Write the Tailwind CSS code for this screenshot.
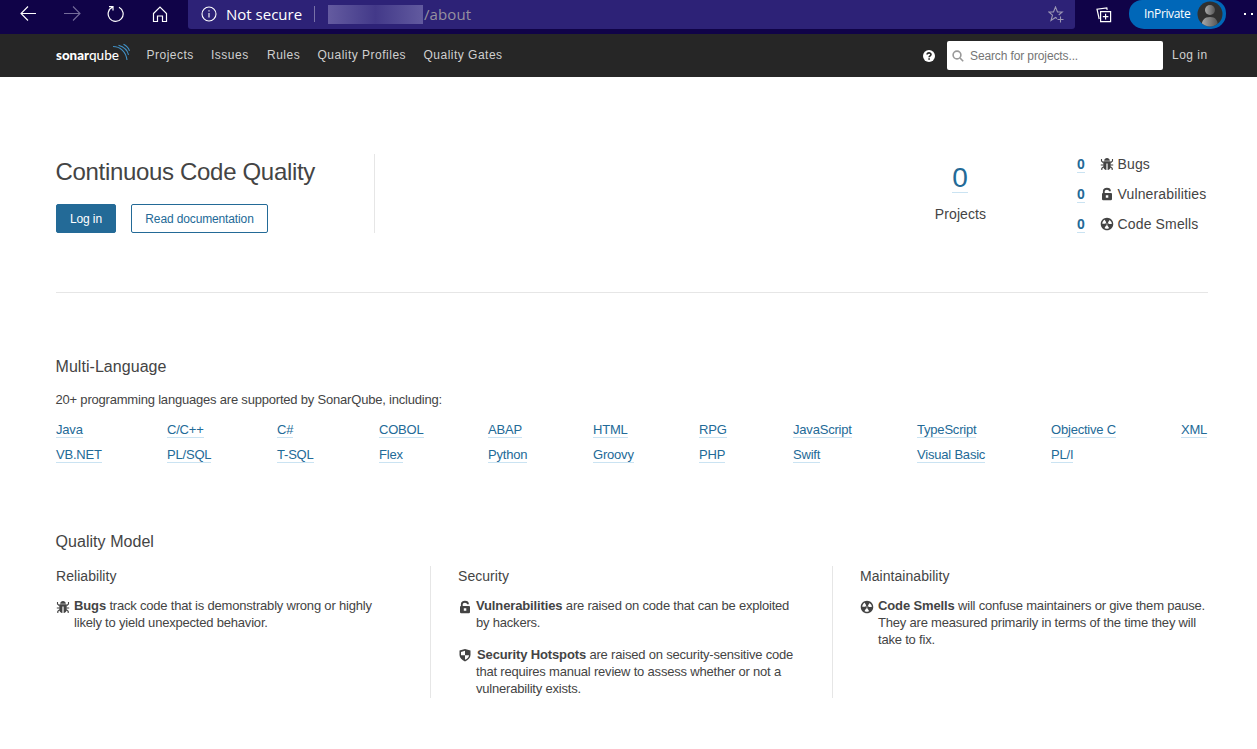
<!DOCTYPE html>
<html lang="en">
<head>
<meta charset="utf-8">
<title>SonarQube</title>
<script src="https://cdn.jsdelivr.net/npm/@tailwindcss/browser@4"></script>
</head>
<body class="w-[1257px] h-[749px] overflow-hidden bg-white text-[13px] leading-[17px] text-[#444] font-['Liberation_Sans',Arial,sans-serif]">
<svg class="hidden">
  <symbol id="bug" viewBox="0 0 14 14"><path d="M4.200 3.700C4.200 0 9.800 0 9.800 3.700zM3.300 4.300h7.400v5.200c0 2-1.500 3.500-3 3.500h-.1V6.500H6.400V13h-.1c-1.500 0-3-1.500-3-3.500z"/><path d="M3.500 5.800 1.500 4V2M10.500 5.800l2-1.800V2M3.500 8H.8M10.500 8h2.700M3.700 9.800 1.800 11.300V13M10.300 9.800l1.900 1.500V13" fill="none" stroke="#444" stroke-width="1.100"/></symbol>
  <symbol id="lock" viewBox="0 0 14 14"><path fill-rule="evenodd" d="M3 6h8a1 1 0 0 1 1 1v5a1.200 1.200 0 0 1-1.200 1.200H3.200A1.200 1.200 0 0 1 2 12V7a1 1 0 0 1 1-1zM5.800 8.200v2.600h2.500V8.200z"/><path d="M3.800 6.500V4.200C3.800 .9 10 .9 10 4.200" fill="none" stroke="#444" stroke-width="1.800"/></symbol>
  <symbol id="smell" viewBox="1.300 1.300 13.400 13.400"><path d="M8 2C4.700 2 2 4.700 2 8s2.700 6 6 6 6-2.700 6-6-2.700-6-6-6zm-.5 5.500h.9v.9h-.9v-.9zm-3.800.2c-.1 0-.2-.1-.2-.2 0-.4.1-1.200.6-2S5.300 4.200 5.600 4c.2 0 .3 0 .3.1l1.300 2.300c0 .1 0 .2-.1.2-.1.2-.2.3-.3.5-.1.2-.2.4-.2.5 0 .1-.1.2-.2.2l-2.700-.1zM9.900 12c-.3.2-1.100.5-2 .5-.9 0-1.700-.3-2-.5-.1 0-.1-.2-.1-.3l1.300-2.300c0-.1.1-.1.2-.1.2.1.3.1.5.1s.4 0 .5-.1c.1 0 .2 0 .2.1l1.300 2.300c.2.2.2.3.1.3zm2.500-4.100L9.700 8c-.1 0-.2-.1-.2-.2 0-.2-.1-.4-.2-.5 0-.1-.2-.3-.3-.4-.1 0-.1-.1-.1-.2l1.300-2.300c.1-.1.2-.1.3-.1.3.2 1 .7 1.500 1.500s.6 1.600.6 2c0 0-.1.1-.2.1z"/></symbol>
</svg>

<header class="flex h-[34px] bg-[#100348] text-white font-['Open_Sans','Noto_Sans',sans-serif]">
  <div class="w-[188px] shrink-0 flex pl-[20px] pt-[5px]">
    <svg class="w-[17px] h-[17px]" viewBox="0 0 17 17" fill="none" stroke="#fff" stroke-width="1.100"><path d="M16 8.500H1M8 1.500l-7 7 7 7"/></svg>
    <svg class="w-[17px] h-[17px] ml-[27px]" viewBox="0 0 17 17" fill="none" stroke="#746c99" stroke-width="1.100"><path d="M0 8.500h15.500M9 1.500l7 7-7 7"/></svg>
    <svg class="w-[18px] h-[18px] ml-[26px]" viewBox="0 0 18 18" fill="none" stroke="#fff" stroke-width="1.200"><path d="M12 2.200A7.500 7.500 0 1 1 5.500 2.100M2 1.600h4v4"/></svg>
    <svg class="w-[16px] h-[18px] ml-[27px]" viewBox="0 0 16 18" fill="none" stroke="#fff" stroke-width="1.200"><path d="M1.500 8.500 8 2l6.500 6.500v8h-4v-5.500h-5v5.500h-4z"/></svg>
  </div>
  <div class="w-[887px] h-[29px] shrink-0 rounded-b-[3px] bg-[#2d2277] flex items-center pl-[13px] pr-[11px]">
    <svg class="w-[16px] h-[16px] -mt-[2px]" viewBox="0 0 16 16" fill="none" stroke="#fff" stroke-width="1.100"><circle cx="8" cy="8" r="7"/><path d="M8 7v4.500M8 4.300v1.300"/></svg>
    <span class="ml-[9px] w-[77px] text-[15px] leading-[29px] whitespace-nowrap">Not secure</span>
    <i class="ml-[11px] w-px h-[16px] bg-[#7972a8] -mt-px"></i>
    <i class="ml-[13px] w-[95px] h-[19px] bg-linear-to-r from-[#645ba0] via-[#433989] to-[#625a9f]"></i>
    <span class="ml-[1px] text-[15px] leading-[29px] tracking-[0.1px] text-[#96919f]">/about</span>
    <svg class="ml-auto w-[16px] h-[17px]" viewBox="0 0 16 17" fill="none" stroke="#9b96b4" stroke-width="1.100"><path d="M9 12.500 7.500 11.500 3 14.500l1.500-5.300L.8 6h4.700l2-5 2 5h4.700l-3.500 3M12.500 10.500v6M9.500 13.500h6"/></svg>
  </div>
  <div class="flex flex-1">
    <svg class="w-[16px] h-[16px] ml-[21px] mt-[7px]" viewBox="0 0 16 16" fill="none" stroke="#fff" stroke-width="1.200"><path d="M4.600 4.600h10v10h-10zM9.600 6.800v5.600M6.800 9.600h5.600M3.200 12 1 2.200 10.800.8l.4 2"/></svg>
    <div class="ml-[17px] w-[97px] h-[29px] rounded-b-[15px] rounded-t-[13px] bg-[#0067b8] flex items-center pl-[15px]">
      <span class="w-[47px] text-[12px] leading-[28px] -mt-px tracking-[-0.350px] font-medium">InPrivate</span>
      <svg class="ml-[6px] w-[26px] h-[26px] -mt-[2px]" viewBox="0 0 26 26"><defs><linearGradient id="avatar"><stop stop-color="#aaa"/><stop offset="1" stop-color="#555"/></linearGradient><clipPath id="round"><circle cx="13" cy="13" r="12.500"/></clipPath></defs><circle cx="13" cy="13" r="12.500" fill="#303030"/><g fill="url(#avatar)" clip-path="url(#round)"><circle cx="13" cy="9" r="5"/><path d="M4.500 26c0-7 3-10 8.500-10s8 3 8 10z"/></g></svg>
    </div>
    <div class="ml-[18px] mt-[13px] flex gap-[5px]"><i class="size-[2px] bg-white"></i><i class="size-[2px] bg-white"></i></div>
  </div>
</header>

<nav class="flex h-[43px] bg-[#262626] text-[#d0d0d0] text-[12px] leading-[42px] tracking-[0.490px] pl-[55px] whitespace-nowrap font-medium">
  <svg class="w-[76px] h-[30px] mt-[6px]" viewBox="0 0 76 30"><text x="1" y="20" font-family="Lato" font-size="13.500" letter-spacing="0" fill="#fff" font-weight="900" textLength="33" lengthAdjust="spacingAndGlyphs">sonar</text><text x="34" y="20" font-family="Lato" font-size="13.500" letter-spacing="0" fill="#fff" textLength="30" lengthAdjust="spacingAndGlyphs">qube</text><g fill="none" stroke="#4190c4" stroke-width="1.100"><path d="M58 6.500c7 0 13 5 14 13.500M63.500 5.300c5 1.500 9 5 10 9.500M68.500 4.300c3 1.500 5 3.500 6 6.500"/></g></svg>
  <span class="ml-[15.500px] w-[64.500px]">Projects</span><span class="w-[56px]">Issues</span><span class="w-[50.500px]">Rules</span><span class="w-[106px]">Quality Profiles</span><span>Quality Gates</span>
  <svg class="ml-auto w-[12px] h-[12px] mt-[16px]" viewBox="0 0 12 12"><circle cx="6" cy="6" r="6" fill="#fff"/><path d="M4.100 4.600C4.100 2.300 8 2.300 8 4.600c0 1.300-1.900 1.200-1.900 2.700M6.100 8.300v1.500" fill="none" stroke="#262626" stroke-width="1.600"/></svg>
  <div class="ml-[12px] mt-[7px] w-[216px] h-[29px] rounded-[2px] bg-white flex items-center pl-[5px] text-[#757575] leading-[29px] tracking-[-0.120px] font-normal">
    <svg class="w-[12px] h-[12px]" viewBox="0 0 12 12" fill="none" stroke="#999" stroke-width="1.600"><circle cx="5" cy="5" r="3.900"/><path d="m8 8 3.200 3.200"/></svg><span class="ml-[6px] pt-[2px]">Search for projects...</span>
  </div>
  <span class="ml-[9px] w-[85px]">Log in</span>
</nav>

<main class="px-[56px] w-[1264px]">
  <section class="flex h-[216px] w-[1152px] border-b border-[#e6e6e6] pt-[77px]">
    <div class="w-[319px] h-[79px] border-r border-[#e6e6e6]">
      <h1 class="text-[24px] leading-[36px] tracking-[-0.320px] -ml-[0.500px]">Continuous Code Quality</h1>
      <div class="mt-[14px] flex gap-[15px] text-[12px] leading-[28px] tracking-[-0.130px]">
        <a class="w-[60px] h-[29px] rounded-[2px] border border-[#236a97] bg-[#236a97] text-white text-center font-medium">Log in</a>
        <a class="w-[137px] h-[29px] rounded-[2px] border border-[#236a97] text-[#236a97] text-center">Read documentation</a>
      </div>
    </div>
    <div class="ml-[545px] w-[80px] flex flex-col items-center text-[14px]">
      <a class="mt-[8px] h-[31px] border-b border-[#cae3f2] text-[#236a97] text-[28px] leading-[32px]">0</a>
      <span class="mt-[12px] ml-px leading-[18px] tracking-[0.100px]">Projects</span>
    </div>
    <div class="ml-[77px] grid grid-cols-[23px_17.500px_auto] auto-rows-[30px] -mt-[4px] text-[14px] leading-[28px] tracking-[0.150px] content-start">
      <a class="mt-[6px] h-[17px] w-[8px] leading-[16px] font-bold tracking-normal text-[#236a97] border-b border-[#cae3f2]">0</a><svg class="size-[14px] mt-[7px] fill-[#444]"><use href="#bug"/></svg><span>Bugs</span>
      <a class="mt-[6px] h-[17px] w-[8px] leading-[16px] font-bold tracking-normal text-[#236a97] border-b border-[#cae3f2]">0</a><svg class="size-[14px] mt-[7px] fill-[#444]"><use href="#lock"/></svg><span>Vulnerabilities</span>
      <a class="mt-[6px] h-[17px] w-[8px] leading-[16px] font-bold tracking-normal text-[#236a97] border-b border-[#cae3f2]">0</a><svg class="size-[14px] mt-[7px] fill-[#444]"><use href="#smell"/></svg><span>Code Smells</span>
    </div>
  </section>

  <section class="pt-[62px] h-[176px]">
    <h2 class="text-[16px] leading-[24px] -ml-[0.500px] tracking-[0.050px]">Multi-Language</h2>
    <p class="mt-[12px] -ml-[0.500px] tracking-[-0.200px]">20+ programming languages are supported by SonarQube, including:</p>
    <div class="mt-[14px] grid grid-cols-[111px_110px_102px_109px_105px_106px_94px_124px_134px_130px_auto] gap-y-[9px] justify-items-start text-[#236a97] leading-[15px] tracking-[-0.200px] whitespace-nowrap [&>a]:border-b [&>a]:border-[#cae3f2]">
      <a>Java</a><a>C/C++</a><a>C#</a><a>COBOL</a><a>ABAP</a><a>HTML</a><a>RPG</a><a>JavaScript</a><a>TypeScript</a><a>Objective C</a><a>XML</a>
      <a>VB.NET</a><a>PL/SQL</a><a>T-SQL</a><a>Flex</a><a>Python</a><a>Groovy</a><a>PHP</a><a>Swift</a><a>Visual Basic</a><a>PL/I</a>
    </div>
  </section>

  <section class="pt-[61px]">
    <h2 class="text-[16px] leading-[24px] -ml-[0.500px] tracking-[0.050px]">Quality Model</h2>
    <div class="mt-[12px] flex h-[132px] tracking-[-0.200px] [&_b]:tracking-[-0.130px] [&_h3]:tracking-[0.050px]">
      <div class="w-[375px] shrink-0 border-r border-[#e6e6e6]">
        <h3 class="text-[14px] leading-[20px]">Reliability</h3>
        <div class="mt-[11px] flex"><svg class="size-[14px] mt-[3px] mr-[4px] shrink-0 fill-[#444]"><use href="#bug"/></svg><p><b>Bugs</b> track code that is demonstrably wrong or highly<br>likely to yield unexpected behavior.</p></div>
      </div>
      <div class="w-[402px] shrink-0 pl-[27px] border-r border-[#e6e6e6]">
        <h3 class="text-[14px] leading-[20px]">Security</h3>
        <div class="mt-[11px] flex"><svg class="size-[14px] mt-[3px] mr-[4px] shrink-0 fill-[#444]"><use href="#lock"/></svg><p><b>Vulnerabilities</b> are raised on code that can be exploited<br>by hackers.</p></div>
        <div class="mt-[15px] flex"><svg class="size-[14px] mt-[2px] mr-[4px] shrink-0" viewBox="0 0 14 14"><path fill="#444" fill-rule="evenodd" d="M7 1 12.500 2.500V7C12.500 10 10 12 7 13.500 4 12 1.500 10 1.500 7V2.500zM7 2.800 3 3.900V7.200h4zM7 7.200v4.500c2-1 4-2.300 4-4.500z"/></svg><p><b class="ml-px">Security Hotspots</b> are raised on security-sensitive code<br>that requires manual review to assess whether or not a<br>vulnerability exists.</p></div>
      </div>
      <div class="pl-[27px] shrink-0 whitespace-nowrap">
        <h3 class="text-[14px] leading-[20px]">Maintainability</h3>
        <div class="mt-[11px] flex"><svg class="size-[14px] mt-[3px] mr-[4px] shrink-0 fill-[#444]"><use href="#smell"/></svg><p><b>Code Smells</b> will confuse maintainers or give them pause.<br>They are measured primarily in terms of the time they will<br>take to fix.</p></div>
      </div>
    </div>
  </section>
</main>
</body>
</html>
